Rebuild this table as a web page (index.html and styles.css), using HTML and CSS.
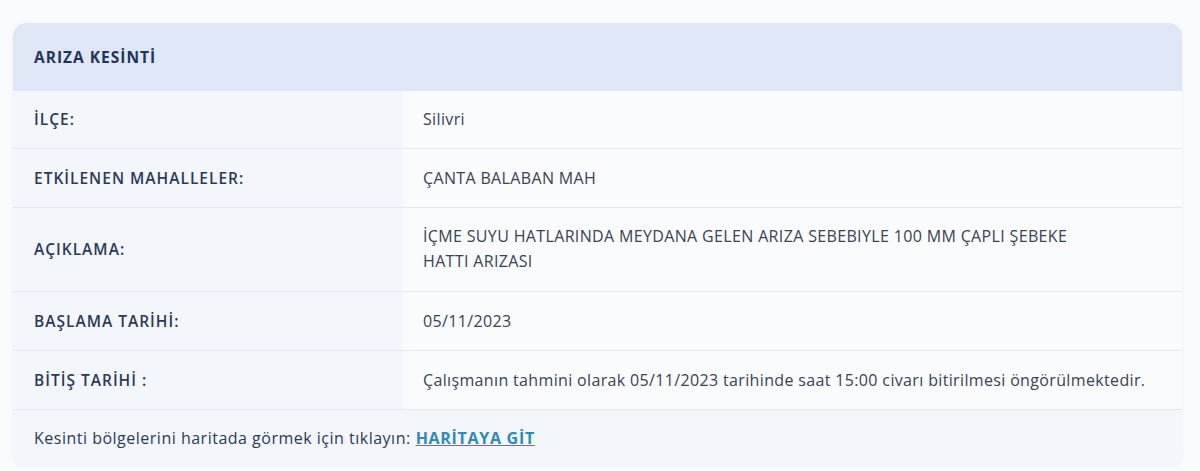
FILE: index.html
```html
<!DOCTYPE html>
<html lang="tr">
<head>
  <meta charset="UTF-8">
  <meta name="viewport" content="width=device-width, initial-scale=1.0">
  <title>Arıza Kesinti</title>
  <link rel="stylesheet" href="styles.css">
</head>
<body>
  <!-- Outage card -->
  <div class="outage-card">
    <div class="card-header">ARIZA KESİNTİ</div>
    <table class="info-table">
      <tr class="row-short">
        <th>İLÇE:</th>
        <td>Silivri</td>
      </tr>
      <tr>
        <th>ETKİLENEN MAHALLELER:</th>
        <td>ÇANTA BALABAN MAH</td>
      </tr>
      <tr class="row-tall">
        <th>AÇIKLAMA:</th>
        <td><span class="desc">İÇME SUYU HATLARINDA MEYDANA GELEN ARIZA SEBEBIYLE 100 MM ÇAPLI ŞEBEKE HATTI ARIZASI</span></td>
      </tr>
      <tr>
        <th>BAŞLAMA TARİHİ:</th>
        <td>05/11/2023</td>
      </tr>
      <tr>
        <th>BİTİŞ TARİHİ :</th>
        <td>Çalışmanın tahmini olarak 05/11/2023 tarihinde saat 15:00 civarı bitirilmesi öngörülmektedir.</td>
      </tr>
    </table>
    <div class="card-footer">
      Kesinti bölgelerini haritada görmek için tıklayın: <a href="#" class="map-link">HARİTAYA GİT</a>
    </div>
  </div>
</body>
</html>
```

FILE: styles.css
```css
/* General Styling */
body {
  margin: 0;
  padding: 23px 18px 0 13px;
  background: #f9fafc;
  font-family: 'Open Sans', 'Lato', sans-serif;
  color: #3a4253;
}

.outage-card {
  background: #f3f6fa;
  border-radius: 14px;
  overflow: hidden;
  box-shadow: 0 1px 4px rgba(40, 60, 100, 0.06);
}

.card-header {
  height: 68px;
  display: flex;
  align-items: center;
  padding-left: 21px;
  background: #dfe7f6;
  color: #1f3559;
  font-size: 15.5px;
  font-weight: 700;
  letter-spacing: 1px;
}

.info-table {
  width: 100%;
  border-collapse: collapse;
}

.info-table tr {
  height: 59px;
  border-bottom: 1px solid #e3e7ee;
}

.info-table tr.row-short {
  height: 57px;
}

.info-table tr.row-tall {
  height: 84px;
}

.info-table th {
  width: 390px;
  padding: 0 0 0 21px;
  box-sizing: border-box;
  text-align: left;
  font-size: 15.5px;
  font-weight: 600;
  letter-spacing: 1px;
  color: #2c3a57;
  background: #f3f6fa;
}

.info-table td {
  padding: 0 20px;
  font-size: 16px;
  letter-spacing: 0.35px;
  color: #3a4253;
  background: #f9fbfd;
}

.desc {
  display: block;
  max-width: 680px;
  line-height: 25px;
}

.card-footer {
  height: 56px;
  display: flex;
  align-items: center;
  padding-left: 21px;
  font-size: 16px;
  letter-spacing: 0.5px;
  color: #2c3a57;
  background: #f3f6fa;
}

.map-link {
  margin-left: 5px;
  color: #2e8bb5;
  font-weight: 700;
  letter-spacing: 0.7px;
}
```
